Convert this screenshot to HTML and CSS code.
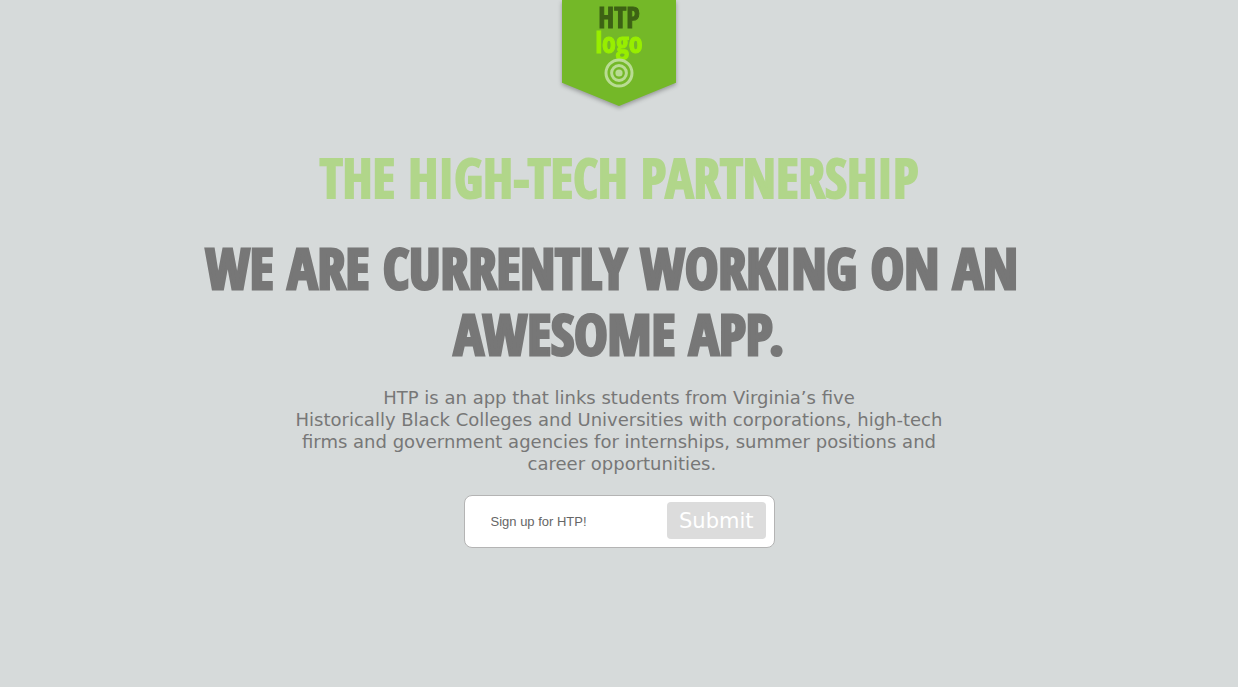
FILE: index.html
```html
<!DOCTYPE html>
<html lang="en">
<head>
<meta charset="utf-8">
<meta name="viewport" content="width=device-width, initial-scale=1">
<title>The High-Tech Partnership</title>
<link rel="stylesheet" href="styles.css">
</head>
<body>
<header class="header">
  <a class="ribbon" href="#">
    <span class="ribbon-body">
      <span class="logo-name">HTP</span>
      <span class="logo-word">logo</span>
      <svg class="logo-target" viewBox="0 0 30 30" aria-hidden="true">
        <circle cx="15" cy="15" r="13"/>
        <circle cx="15" cy="15" r="7.4"/>
        <circle class="dot" cx="15" cy="15" r="3.6"/>
      </svg>
    </span>
  </a>
</header>
<main class="main">
  <h1 class="title">THE HIGH-TECH PARTNERSHIP</h1>
  <h2 class="headline">WE ARE CURRENTLY WORKING ON AN&nbsp;<br>AWESOME APP.</h2>
  <p class="intro">HTP is an app that links students from Virginia’s five<br>Historically Black Colleges and Universities with corporations, high-tech<br>firms and government agencies for internships, summer positions and<br>&nbsp;career opportunities.</p>
  <form class="signup">
    <input class="signup-field" type="email" placeholder="Sign up for HTP!" aria-label="Sign up for HTP!">
    <button class="signup-button" type="submit">Submit</button>
  </form>
</main>
</body>
</html>
```
FILE: styles.css
```css
* { box-sizing: border-box; }

body {
  margin: 0;
  background: #d6dada;
  color: #777;
  font-family: Verdana, "DejaVu Sans", sans-serif;
  text-align: center;
}

.header {
  display: flex;
  justify-content: center;
}

.ribbon {
  text-decoration: none;
  filter: drop-shadow(0 2px 2px rgba(0, 0, 0, 0.3));
}

.ribbon-body {
  display: flex;
  flex-direction: column;
  align-items: center;
  width: 114px;
  height: 106px;
  padding-top: 4px;
  background: #74b828;
  clip-path: polygon(0 0, 100% 0, 100% 78%, 50% 100%, 0 78%);
}

.logo-name,
.logo-word,
.title,
.headline {
  font-family: Impact, "Open Sans Condensed", "Liberation Sans Narrow", sans-serif;
  font-weight: bold;
}

.logo-name,
.logo-word {
  font-size: 28px;
  line-height: 26px;
  -webkit-text-stroke: 1px;
}

.logo-name {
  color: #3d6214;
}

.logo-word {
  color: #98ee00;
  line-height: 24px;
}

.logo-target {
  width: 30px;
  height: 30px;
  margin-top: 4px;
  fill: none;
  stroke: #b9dc93;
  stroke-width: 3;
}

.logo-target .dot {
  fill: #b9dc93;
  stroke: none;
}

.main {
  display: flex;
  flex-direction: column;
  align-items: center;
  padding: 42px 24px;
}

.title {
  margin: 0 0 26px;
  color: #b1d68a;
  font-size: 53px;
  line-height: 60px;
  -webkit-text-stroke: 2px;
}

.headline {
  margin: 0 0 21px;
  font-size: 56px;
  line-height: 66px;
  -webkit-text-stroke: 3px;
}

.intro {
  margin: 0;
  font-size: 18px;
  line-height: 22px;
}

.signup {
  display: flex;
  align-items: center;
  gap: 8px;
  width: 311px;
  max-width: 100%;
  margin: 20px 0 0;
  padding: 6px 8px 8px;
  border: 1px solid #b4b4b4;
  border-radius: 8px;
  background: #fff;
}

.signup-field {
  flex: 1;
  min-width: 0;
  padding: 2px 0 0 18px;
  border: 0;
  background: none;
  color: #666;
  font: 13px/18px "Liberation Sans", Arial, sans-serif;
}

.signup-field::placeholder {
  color: #666;
  opacity: 1;
}

.signup-button {
  padding: 5px 12px 4px;
  border: 0;
  border-radius: 4px;
  background: #dcdcdc;
  color: #fff;
  font: 21px/28px Verdana, "DejaVu Sans", sans-serif;
}
```
